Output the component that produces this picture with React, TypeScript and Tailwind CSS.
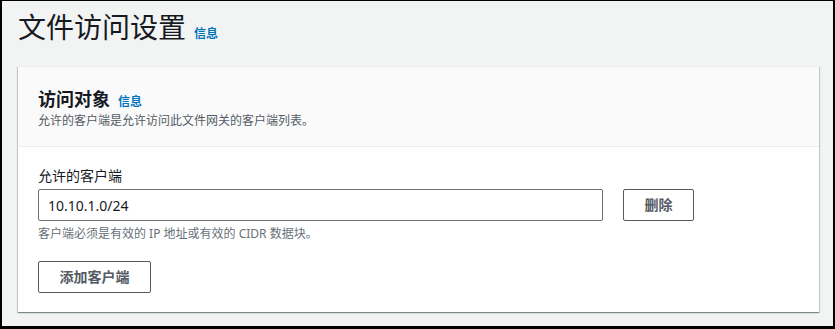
import React from 'react';

const font = { fontFamily: '"Noto Sans", "Noto Sans CJK SC", sans-serif' };

export default function App() {
    return (
        <div className="w-[835px] h-[329px] bg-black pt-px pl-[2px] pr-[2px] pb-[3px]" style={font}>
            <div className="h-full bg-[#f2f3f3] pl-4 pr-[14px] pt-[7px]">

                {/* Page title */}
                <div className="flex items-baseline gap-2 h-[58px]">
                    <h1 className="text-[28px] leading-[38px] text-[#16191f] font-normal">文件访问设置</h1>
                    <a className="text-xs font-bold text-[#0073bb]">信息</a>
                </div>

                {/* Card */}
                <div className="bg-white border-t border-[#eaeded] shadow-[0_1px_1px_0_rgba(0,28,36,0.3),1px_1px_1px_0_rgba(0,28,36,0.15),-1px_1px_1px_0_rgba(0,28,36,0.15)]">
                    <div className="bg-[#fafafa] border-b border-[#eaeded] px-5 pt-[19px] pb-[16px]">
                        <div className="flex items-baseline gap-2">
                            <h2 className="text-lg leading-[26px] font-bold text-[#16191f]">访问对象</h2>
                            <a className="text-xs font-bold text-[#0073bb]">信息</a>
                        </div>
                        <p className="text-xs leading-[18px] text-[#545b64]">允许的客户端是允许访问此文件网关的客户端列表。</p>
                    </div>

                    <div className="px-5 pt-[18px] pb-[19px]">
                        <label className="block text-sm leading-[22px] text-[#16191f] mb-[2px]">允许的客户端</label>
                        <div className="flex gap-5">
                            <input
                                readOnly
                                value="10.10.1.0/24"
                                className="w-[565px] h-[32px] border border-[#687078] rounded-[2px] px-[9px] text-sm text-[#16191f] outline-none"
                                style={font}
                            />
                            <button className="w-[71px] h-[32px] border border-[#545b64] rounded-[2px] text-sm font-bold text-[#545b64] bg-white">
                                删除
                            </button>
                        </div>
                        <p className="text-xs leading-[18px] text-[#687078] mt-[4px]">客户端必须是有效的 IP 地址或有效的 CIDR 数据块。</p>
                        <button className="mt-[18px] w-[113px] h-[32px] border border-[#545b64] rounded-[2px] text-sm font-bold text-[#545b64] bg-white">
                            添加客户端
                        </button>
                    </div>
                </div>
            </div>
        </div>
    );
}
